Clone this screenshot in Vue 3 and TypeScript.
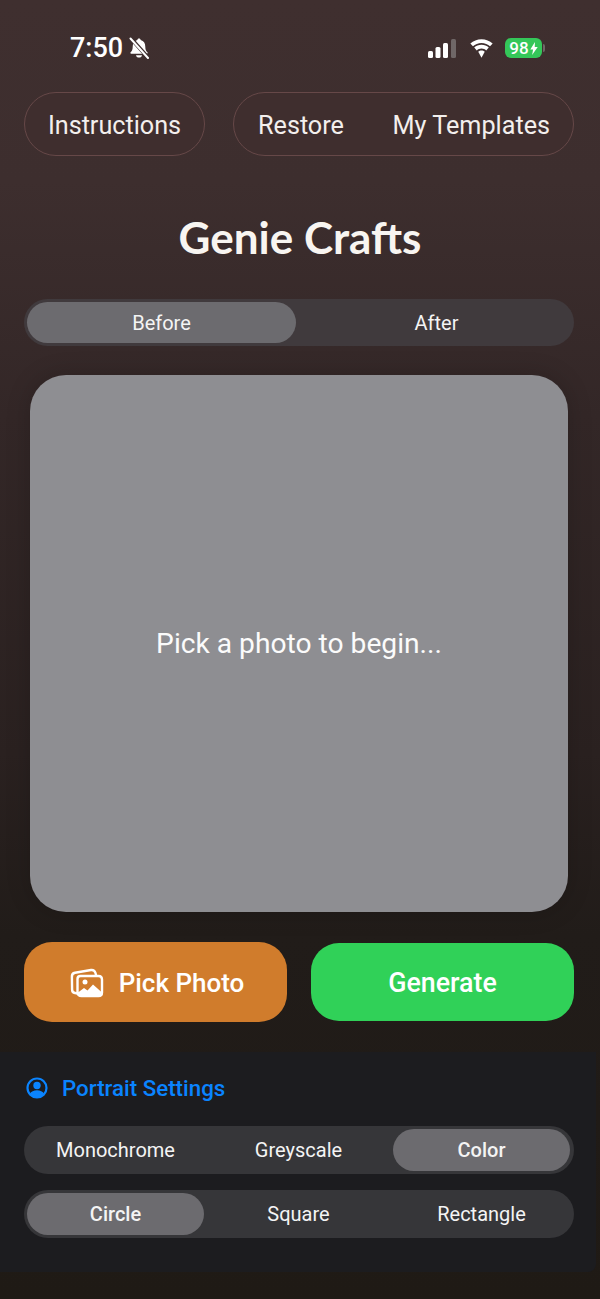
<script setup lang="ts">
const topTabs: string[] = ['Before', 'After']
const colorModes: string[] = ['Monochrome', 'Greyscale', 'Color']
const shapes: string[] = ['Circle', 'Square', 'Rectangle']
</script>

<template>
  <div class="page">
    <header class="status">
      <div class="status-left">
        <span class="time">7:50</span>
        <svg class="bell" viewBox="0 0 22 22" aria-hidden="true">
          <path d="M11 1.500c1 0 1.600.7 1.700 1.600 3 .8 4.600 3.300 4.600 6.600 0 2.600.6 4 2.100 5.600.5.600.2 1.400-.6 1.400H3.200c-.8 0-1.100-.8-.6-1.400C4.100 13.700 4.700 12.300 4.700 9.700c0-3.300 1.600-5.800 4.600-6.600.1-.9.700-1.600 1.700-1.600z" fill="#fff" />
          <path d="M8 18.200h6c-.2 1.400-1.400 2.400-3 2.400s-2.800-1-3-2.400z" fill="#fff" />
          <path d="M3 1.500 20 20.500" stroke="#3f2f2f" stroke-width="4" />
          <path d="M2.500 1.500 20 21" stroke="#fff" stroke-width="2" stroke-linecap="round" />
        </svg>
      </div>
      <div class="status-right">
        <svg class="signal" viewBox="0 0 28 19" aria-hidden="true">
          <rect x="0" y="12" width="5" height="7" rx="1.500" fill="#fff" />
          <rect x="7.500" y="8" width="5" height="11" rx="1.500" fill="#fff" />
          <rect x="15" y="4" width="5" height="15" rx="1.500" fill="#fff" />
          <rect x="23" y="0" width="5" height="19" rx="1.500" fill="#6f6767" />
        </svg>
        <svg class="wifi" viewBox="0 0 24 18" aria-hidden="true">
          <path d="M12 3.600c3.200 0 6.100 1.200 8.200 3.300l2.500-2.700C19.900 1.600 16.100 0 12 0S4.100 1.600 1.300 4.200l2.500 2.700C5.900 4.800 8.800 3.600 12 3.600z" fill="#fff" />
          <path d="M12 9c1.700 0 3.300.7 4.500 1.800l2.500-2.700C17.100 6.400 14.700 5.400 12 5.400S6.900 6.400 5 8.100l2.500 2.700C8.700 9.700 10.300 9 12 9z" fill="#fff" />
          <path d="M12 10.900c-1.200 0-2.300.5-3.100 1.200L12 17.800l3.100-5.700c-.8-.7-1.900-1.200-3.100-1.200z" fill="#fff" />
        </svg>
        <div class="battery">
          <span class="battery-level">98</span>
          <svg class="bolt" viewBox="0 0 8 14" aria-hidden="true">
            <path d="M5 0 0 8h3l-1 6 6-8.500H4.800z" fill="#fff" />
          </svg>
        </div>
      </div>
    </header>

    <nav class="toolbar">
      <button class="pill">Instructions</button>
      <div class="pill pill-group">
        <button class="pill-item">Restore</button>
        <button class="pill-item">My Templates</button>
      </div>
    </nav>

    <h1 class="title">Genie Crafts</h1>

    <div class="segments segments-top">
      <div v-for="(tab, i) in topTabs" :key="tab" class="segment" :class="{ active: i === 0 }">{{ tab }}</div>
    </div>

    <div class="canvas">Pick a photo to begin...</div>

    <div class="actions">
      <button class="action pick">
        <svg class="photos" viewBox="0 0 34 30" aria-hidden="true">
          <path d="M8 25.500 5 25C3 24.700 2 23.300 2.100 21.500L1.900 9C1.700 6.500 3 5 5 4.700L21 2c2.300-.3 3.800.8 4.500 3l.5 2" fill="none" stroke="#fff" stroke-width="2.400" stroke-linecap="round" />
          <path d="M10.500 8h18c2.200 0 3.500 1.300 3.500 3.500v13c0 2.500-1.300 3.500-3.500 3.500h-17C9 28 7.500 26.700 7.500 24.500V11c0-1.800 1.200-3 3-3z" fill="none" stroke="#fff" stroke-width="2.400" />
          <circle cx="15" cy="14" r="2.500" fill="#fff" />
          <path d="M8 27.500v-3l6-4.500 3.500 2.500 5.500-6 9 8v3z" fill="#fff" />
        </svg>
        <span>Pick Photo</span>
      </button>
      <button class="action generate">Generate</button>
    </div>

    <section class="panel">
      <div class="panel-head">
        <svg class="person" viewBox="0 0 22 22" aria-hidden="true">
          <circle cx="11" cy="11" r="9.500" fill="none" stroke="#0a84ff" stroke-width="2.200" />
          <circle cx="11" cy="8.500" r="3.700" fill="#0a84ff" />
          <path d="M3.800 17c1.300-2.600 4-3.800 7.200-3.800s5.900 1.200 7.200 3.800c-1.700 2.400-4.300 4-7.200 4s-5.500-1.600-7.200-4z" fill="#0a84ff" />
        </svg>
        <span>Portrait Settings</span>
      </div>
      <div class="segments three">
        <div v-for="(m, i) in colorModes" :key="m" class="segment" :class="{ active: i === 2 }">{{ m }}</div>
      </div>
      <div class="segments three">
        <div v-for="(s, i) in shapes" :key="s" class="segment" :class="{ active: i === 0 }">{{ s }}</div>
      </div>
    </section>
  </div>
</template>

<style>
html, body { margin: 0; background: #1e1a15; }
</style>

<style scoped>
.page {
  width: 600px;
  height: 1299px;
  overflow: hidden;
  display: flex;
  flex-direction: column;
  font-family: Roboto, "Liberation Sans", sans-serif;
  color: #f7f4f2;
  background: linear-gradient(180deg, #3f2f2f 0%, #3d2e2e 14%, #332727 32%, #2a2120 58%, #211c19 72%, #1f1a15 100%);
}
button { font: inherit; color: inherit; background: none; border: 0; padding: 0; }

.status {
  height: 92px;
  box-sizing: border-box;
  padding: 32px 58px 0 70px;
  display: flex;
  justify-content: space-between;
  align-items: flex-start;
}
.status-left { display: flex; align-items: center; gap: 6px; height: 32px; }
.time { font-size: 27px; font-weight: 500; color: #fff; line-height: 32px; }
.bell { width: 22px; height: 22px; margin-left: -1px; }
.status-right { display: flex; align-items: center; height: 32px; }
.signal { width: 28px; height: 19px; margin-right: 13px; margin-top: 1px; }
.wifi { width: 25px; height: 19px; margin-right: 11px; }
.battery {
  width: 37px;
  height: 20px;
  border-radius: 6px;
  background: #34c759;
  display: flex;
  align-items: center;
  justify-content: center;
  gap: 1px;
  position: relative;
}
.battery::after {
  content: "";
  position: absolute;
  right: -3px;
  top: 6px;
  width: 2px;
  height: 8px;
  border-radius: 0 2px 2px 0;
  background: #6f6767;
}
.battery-level { font-size: 17px; font-weight: 500; line-height: 20px; color: #fff; }
.bolt { width: 8px; height: 13px; }

.toolbar {
  display: flex;
  justify-content: space-between;
  padding: 0 26px 0 24px;
  height: 64px;
}
.pill {
  box-sizing: border-box;
  height: 64px;
  border: 1.500px solid #664848;
  border-radius: 32px;
  background: #3f2e2e;
  font-size: 25.200px;
  color: #f3efed;
  width: 181px;
  display: flex;
  align-items: center;
  justify-content: center;
  padding-top: 2px;
}
.pill-group {
  width: 341px;
  justify-content: space-between;
  padding: 2px 23px 0 24px;
}
.pill-item { font-size: 25.200px; }

.title {
  margin: 52px 0 0;
  height: 59px;
  text-align: center;
  font-family: Lato, "DejaVu Sans Condensed", sans-serif;
  font-size: 44px;
  line-height: 59px;
  font-weight: 700;
  color: #f8f5f1;
}

.segments {
  box-sizing: border-box;
  height: 48px;
  margin: 0 26px 0 24px;
  padding: 3px 4px 3px 3px;
  border-radius: 24px;
  display: grid;
  gap: 6px;
  background: #363639;
  font-size: 20px;
}
.segments-top {
  height: 47px;
  margin-top: 32px;
  padding-right: 0;
  gap: 3px;
  grid-template-columns: 269px 1fr;
  background: #403a3d;
}
.three { grid-template-columns: 1fr 1fr 1fr; }
.segment {
  display: flex;
  align-items: center;
  justify-content: center;
  border-radius: 21px;
  color: #f4f4f4;
}
.segment.active { background: #6c6b6f; font-weight: 500; }
.segments-top .segment { font-size: 20px; font-weight: 400; }

.canvas {
  box-sizing: border-box;
  flex: none;
  width: 538px;
  height: 537px;
  margin: 29px 0 0 30px;
  border-radius: 36px;
  background: #8e8e92;
  box-shadow: 0 0 24px rgba(0, 0, 0, 0.18);
  display: flex;
  align-items: center;
  justify-content: center;
  font-size: 28.200px;
  color: #fbfbfb;
  padding-bottom: 1px;
}

.actions {
  display: flex;
  justify-content: space-between;
  margin: 30px 26px 0 24px;
  align-items: center;
  height: 80px;
}
.action {
  box-sizing: border-box;
  flex: none;
  width: 263px;
  border-radius: 28px;
  display: flex;
  align-items: center;
  justify-content: center;
  font-size: 26px;
  font-weight: 500;
  color: #fff;
  padding-top: 2px;
}
.pick { height: 80px; background: #d07c2c; gap: 15px; padding-left: 3px; }
.generate { height: 78px; background: #30d158; font-size: 26.800px; }
.photos { width: 34px; height: 30px; margin-top: -1px; }

.panel {
  box-sizing: border-box;
  width: 596px;
  height: 220px;
  margin-top: 30px;
  padding-top: 22px;
  background: #1c1c1f;
  border-radius: 0 0 8px 0;
}
.panel-head {
  display: flex;
  align-items: center;
  gap: 14px;
  height: 28px;
  margin: 0 0 24px 26px;
  color: #0a84ff;
  font-size: 22.300px;
  font-weight: 500;
}
.person { width: 22px; height: 22px; }
.panel .segments { margin: 0 22px 16px 24px; }
</style>
